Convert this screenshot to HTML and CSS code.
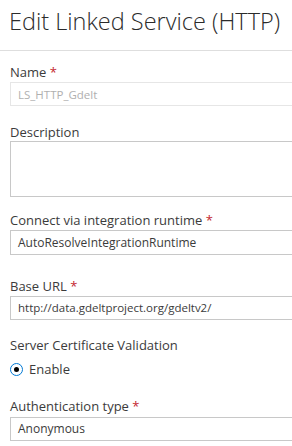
FILE: index.html
```html
<!DOCTYPE html>
<html lang="en">
<head>
    <meta charset="UTF-8">
    <meta name="viewport" content="width=device-width, initial-scale=1.0">
    <title>Edit Linked Service (HTTP)</title>
    <link rel="stylesheet" href="styles.css">
</head>
<body>
    <div class="header">
        <h1>Edit Linked Service (HTTP)</h1>
    </div>

    <form class="form">
        <div class="field field-name">
            <label>Name <span class="required">*</span></label>
            <input type="text" class="input input-disabled" placeholder="LS_HTTP_Gdelt" disabled>
        </div>

        <div class="field field-description">
            <label>Description</label>
            <textarea class="textarea"></textarea>
        </div>

        <div class="field field-runtime">
            <label>Connect via integration runtime <span class="required">*</span></label>
            <div class="input input-runtime">AutoResolveIntegrationRuntime</div>
        </div>

        <div class="field field-url">
            <label>Base URL <span class="required">*</span></label>
            <div class="input">http://data.gdeltproject.org/gdeltv2/</div>
        </div>

        <div class="field field-cert">
            <label>Server Certificate Validation</label>
            <div class="radio-row">
                <span class="radio"><span class="radio-dot"></span></span>
                <span>Enable</span>
            </div>
        </div>

        <div class="field field-auth">
            <label>Authentication type <span class="required">*</span></label>
            <div class="input">Anonymous</div>
        </div>
    </form>
</body>
</html>
```

FILE: styles.css
```css
body {
    margin: 0;
    font-family: "Open Sans", "Noto Sans", sans-serif;
    color: #3b3b3b;
    background: #fff;
    overflow: hidden;
}
.header {
    height: 50px;
    border-bottom: 1px solid #dedede;
}
.header h1 {
    margin: 0;
    padding: 5px 0 0 9px;
    font-size: 23.5px;
    line-height: 32px;
    font-weight: 300;
    color: #2b2b2b;
    white-space: nowrap;
}
.form {
    padding: 0 0 0 10px;
}
.field label {
    display: block;
    font-size: 13px;
    line-height: 18px;
    color: #3b3b3b;
    white-space: nowrap;
}
.required {
    color: #c4262e;
}
.input {
    box-sizing: border-box;
    display: block;
    width: 100%;
    height: 24px;
    margin-top: 1px;
    padding: 0 7px;
    border: 1px solid #c8c8c8;
    border-right: none;
    font-family: inherit;
    font-size: 11.5px;
    line-height: 22px;
    color: #3b3b3b;
    background: #fff;
    white-space: nowrap;
    overflow: hidden;
}
.input-disabled {
    border-color: #e6e6e6;
}
.input-disabled::placeholder {
    color: #b0b0b0;
}
.input-runtime {
    height: 25px;
    line-height: 23px;
    font-size: 12px;
}
.textarea {
    box-sizing: border-box;
    display: block;
    width: 100%;
    height: 56px;
    margin: 0;
    border: 1px solid #c8c8c8;
    border-right: none;
    resize: none;
}
.field-name {
    margin-top: 12px;
}
.field-description {
    margin-top: 17px;
}
.field-runtime {
    margin-top: 14px;
}
.field-url {
    margin-top: 22px;
}
.field-cert {
    margin-top: 16px;
}
.field-auth {
    margin-top: 18px;
}
.field-auth .input {
    margin-top: 2px;
    font-size: 12px;
}
.radio-row {
    display: flex;
    align-items: center;
    gap: 6px;
    margin-top: 5px;
    font-size: 13px;
    line-height: 20px;
}
.radio {
    box-sizing: border-box;
    width: 13px;
    height: 13px;
    border: 1px solid #0078d4;
    border-radius: 50%;
    display: flex;
    align-items: center;
    justify-content: center;
}
.radio-dot {
    width: 5px;
    height: 5px;
    border-radius: 50%;
    background: #000;
}
```
